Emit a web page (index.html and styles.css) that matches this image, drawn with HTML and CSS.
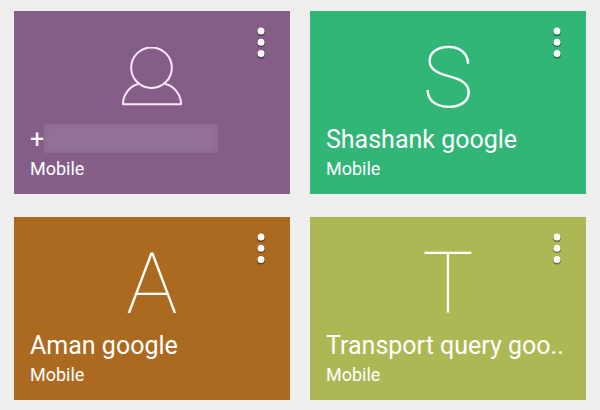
FILE: index.html
```html
<!DOCTYPE html>
<html lang="en">
<head>
    <meta charset="UTF-8">
    <meta name="viewport" content="width=device-width, initial-scale=1.0">
    <title>Contacts</title>
    <link rel="stylesheet" href="styles.css">
</head>
<body>
    <main class="contacts">
        <div class="card purple">
            <button class="menu-btn" type="button" aria-label="More options">
                <svg width="16" height="34" viewBox="0 0 16 34">
                    <g class="dot-shadow"><circle cx="8" cy="6" r="4"/><circle cx="8" cy="17" r="4"/><circle cx="8" cy="28.5" r="4"/></g>
                    <g class="dot"><circle cx="8" cy="5" r="3.5"/><circle cx="8" cy="16.3" r="3.5"/><circle cx="8" cy="27.5" r="3.5"/></g>
                </svg>
            </button>
            <div class="avatar">
                <svg class="person" width="60" height="62" viewBox="0 0 60 62">
                    <circle cx="29.5" cy="20.7" r="20.3"/>
                    <path d="M16.5 37C8 38.5 1 48 1 57.3H59C59 48 52 38.5 43 37"/>
                </svg>
            </div>
            <div class="name">+<span class="hidden-number"></span></div>
            <div class="type">Mobile</div>
        </div>
        <div class="card green">
            <button class="menu-btn" type="button" aria-label="More options">
                <svg width="16" height="34" viewBox="0 0 16 34">
                    <g class="dot-shadow"><circle cx="8" cy="6" r="4"/><circle cx="8" cy="17" r="4"/><circle cx="8" cy="28.5" r="4"/></g>
                    <g class="dot"><circle cx="8" cy="5" r="3.5"/><circle cx="8" cy="16.3" r="3.5"/><circle cx="8" cy="27.5" r="3.5"/></g>
                </svg>
            </button>
            <div class="avatar">S</div>
            <div class="name">Shashank google</div>
            <div class="type">Mobile</div>
        </div>
        <div class="card brown">
            <button class="menu-btn" type="button" aria-label="More options">
                <svg width="16" height="34" viewBox="0 0 16 34">
                    <g class="dot-shadow"><circle cx="8" cy="6" r="4"/><circle cx="8" cy="17" r="4"/><circle cx="8" cy="28.5" r="4"/></g>
                    <g class="dot"><circle cx="8" cy="5" r="3.5"/><circle cx="8" cy="16.3" r="3.5"/><circle cx="8" cy="27.5" r="3.5"/></g>
                </svg>
            </button>
            <div class="avatar">A</div>
            <div class="name">Aman google</div>
            <div class="type">Mobile</div>
        </div>
        <div class="card olive">
            <button class="menu-btn" type="button" aria-label="More options">
                <svg width="16" height="34" viewBox="0 0 16 34">
                    <g class="dot-shadow"><circle cx="8" cy="6" r="4"/><circle cx="8" cy="17" r="4"/><circle cx="8" cy="28.5" r="4"/></g>
                    <g class="dot"><circle cx="8" cy="5" r="3.5"/><circle cx="8" cy="16.3" r="3.5"/><circle cx="8" cy="27.5" r="3.5"/></g>
                </svg>
            </button>
            <div class="avatar">T</div>
            <div class="name">Transport query goo..</div>
            <div class="type">Mobile</div>
        </div>
    </main>
</body>
</html>
```
FILE: styles.css
```css
* {
    margin: 0;
    padding: 0;
    box-sizing: border-box;
}
body {
    font-family: Roboto, sans-serif;
    background: #eeeeee;
    color: white;
}
.contacts {
    display: grid;
    grid-template-columns: repeat(2, minmax(0, 1fr));
    gap: 23px 20px;
    padding: 11px 14px;
}
.card {
    position: relative;
    padding: 36px 16px 12px;
}
.purple {
    background: #855e87;
}
.green {
    background: #31b678;
}
.brown {
    background: #ac6a20;
}
.olive {
    background: #adb855;
}
.menu-btn {
    position: absolute;
    top: 15px;
    right: 21px;
    border: none;
    background: none;
    cursor: pointer;
}
.menu-btn svg {
    display: block;
}
.dot {
    fill: white;
}
.dot-shadow {
    fill: rgba(0, 0, 0, 0.4);
}
.avatar {
    height: 62px;
    margin-bottom: 15px;
    font-size: 86px;
    font-weight: 100;
    line-height: 62px;
    text-align: center;
}
.person {
    display: block;
    margin: 0 auto;
    fill: none;
    stroke: #fbe9fb;
    stroke-width: 2;
    stroke-linejoin: round;
}
.name {
    display: flex;
    font-size: 25px;
    line-height: 32px;
    white-space: nowrap;
}
/* blurred out phone number */
.hidden-number {
    width: 174px;
    height: 29px;
    background: #957398;
    box-shadow: inset 0 0 12px #8a658c;
}
.type {
    font-size: 18px;
    line-height: 26px;
}
```
